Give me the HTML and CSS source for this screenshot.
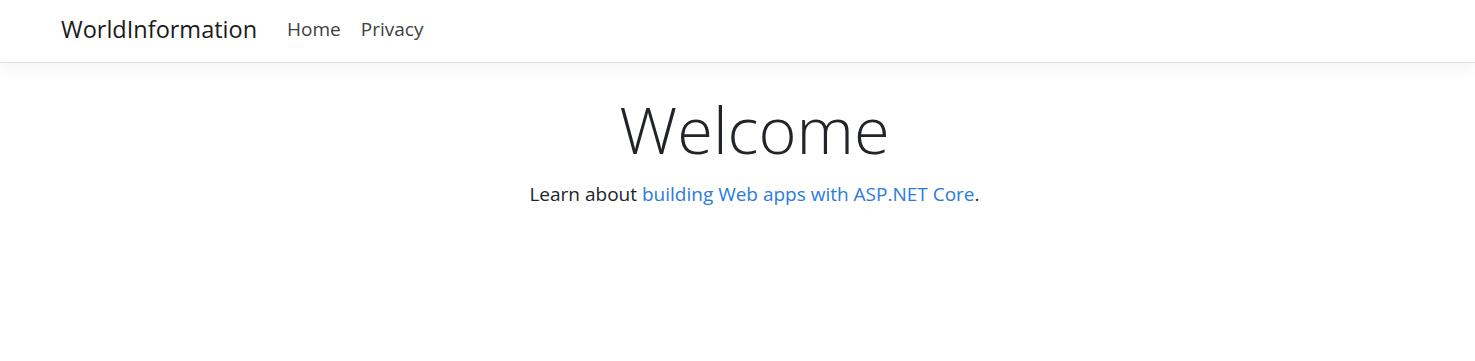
FILE: index.html
```html
<!DOCTYPE html>
<html lang="en">

<head>
    <meta charset="UTF-8">
    <meta name="viewport" content="width=device-width, initial-scale=1.0">
    <title>Home Page - WorldInformation</title>
    <link rel="stylesheet" href="styles.css">
</head>

<body>
    <!-- Navbar -->
    <header class="navbar">
        <a class="navbar-brand" href="#">WorldInformation</a>
        <nav class="nav-links">
            <a class="nav-link" href="#">Home</a>
            <a class="nav-link" href="#">Privacy</a>
        </nav>
    </header>

    <!-- Main content -->
    <main class="main">
        <div class="welcome">
            <h1 class="display-4">Welcome</h1>
            <p>Learn about <a href="#">building Web apps with ASP.NET Core</a>.</p>
        </div>
    </main>
</body>

</html>
```

FILE: styles.css
```css
body {
    font-family: "Open Sans", "Noto Sans", sans-serif;
    margin: 0;
    background-color: white;
    color: #212529;
}

a {
    text-decoration: none;
}

.navbar {
    display: flex;
    align-items: center;
    height: 63px;
    padding: 0 61px 4px;
    box-sizing: border-box;
    border-bottom: 1px solid #e1e1e1;
    box-shadow: 0 5px 15px rgba(0, 0, 0, 0.05);
}

.navbar-brand {
    font-size: 23.5px;
    color: #1a1a1a;
    margin-right: 30px;
}

.nav-links {
    display: flex;
    gap: 20px;
}

.nav-link {
    font-size: 19px;
    color: #404040;
}

.main {
    padding-left: 34px;
    text-align: center;
}

.display-4 {
    font-size: 65px;
    font-weight: 300;
    line-height: 1.2;
    margin: 27px 0 0;
}

.welcome p {
    font-size: 19px;
    margin: 13px 0 0;
}

.welcome a {
    color: #2a7ae2;
}
```
